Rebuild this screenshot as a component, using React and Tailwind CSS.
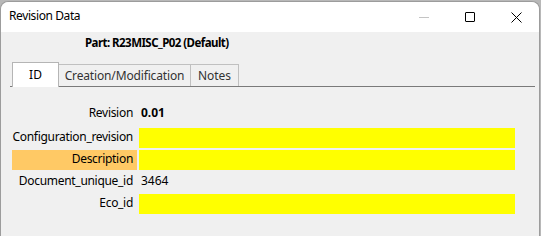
import React from 'react';

// Property rows of the ID tab
const rows = [
  { label: 'Revision', value: '0.01', bold: true, top: 'mt-[17px]' },
  { label: 'Configuration_revision', input: true, top: 'mt-[4px]' },
  { label: 'Description', input: true, highlight: true, top: 'mt-[2px]' },
  { label: 'Document_unique_id', value: '3464', top: 'mt-[2px]' },
  { label: 'Eco_id', input: true, top: 'mt-[2px]' },
];

function TitleBar() {
  return (
    <div className="h-[30px] bg-white flex items-center shrink-0 rounded-t-[8px]">
      <span className="pl-[8px] text-[12px] text-black tracking-[-0.4px] -mt-[2px]">Revision Data</span>
      <div className="ml-auto flex items-center h-full">
        <div className="w-[46px] h-full flex items-center justify-center">
          <div className="w-[10px] h-px bg-[#c4c4c4] mt-px" />
        </div>
        <div className="w-[46px] h-full flex items-center justify-center">
          <div className="w-[10px] h-[10px] border border-black rounded-[1px]" />
        </div>
        <div className="w-[46px] h-full flex items-center justify-center">
          <svg width="11" height="11" viewBox="0 0 11 11">
            <path d="M0.5 0.5L10.5 10.5M10.5 0.5L0.5 10.5" stroke="#000" strokeWidth="1" />
          </svg>
        </div>
      </div>
    </div>
  );
}

function Tabs() {
  return (
    <div className="mt-[11px] ml-[9px] w-[525px] flex items-end border-b border-[#7a7a7a] h-[25px]">
      <div className="ml-[2px] w-[47px] h-[25px] -mb-px bg-white border border-b-0 border-[#b5b5b5] flex items-center justify-center text-[12px] text-black">
        ID
      </div>
      <div className="w-[132px] h-[22px] border border-l-0 border-b-0 border-[#c0c0c0] flex items-center justify-center text-[12px] text-[#333] tracking-[-0.15px]">
        Creation/Modification
      </div>
      <div className="w-[48px] h-[22px] border border-l-0 border-b-0 border-[#c0c0c0] flex items-center justify-center text-[12px] text-[#333]">
        Notes
      </div>
    </div>
  );
}

export default function App() {
  return (
    <div className="w-[541px] h-[236px] bg-[#b8b8b8] overflow-hidden font-['Segoe_UI','Noto_Sans',sans-serif]">
      <div className="w-[540px] h-[237px] mt-px bg-[#f0f0f0] border border-b-0 border-[#9c9c9c] rounded-t-[8px] flex flex-col">
        <TitleBar />
        <div className="pt-[3px] pl-[84px] text-[11.5px] font-bold text-black leading-[16px] tracking-[-0.55px]">
          Part: R23MISC_P02 (Default)
        </div>
        <Tabs />
        <div className="pl-[11px] flex flex-col">
          {rows.map((r) => (
            <div key={r.label} className={`flex h-[20px] gap-[2px] ${r.top}`}>
              <div
                className={`w-[125px] h-full flex items-center justify-end pr-[4px] pb-[2px] text-[12px] text-black tracking-[-0.3px] ${r.highlight ? 'bg-[#ffc965]' : ''}`}
              >
                {r.label}
              </div>
              {r.input ? (
                <div className="w-[376px] h-full bg-[#ffff00]" />
              ) : (
                <div className={`h-full flex items-center pl-[2px] pb-[2px] text-[12px] text-black ${r.bold ? 'font-bold' : ''}`}>
                  {r.value}
                </div>
              )}
            </div>
          ))}
        </div>
      </div>
    </div>
  );
}
